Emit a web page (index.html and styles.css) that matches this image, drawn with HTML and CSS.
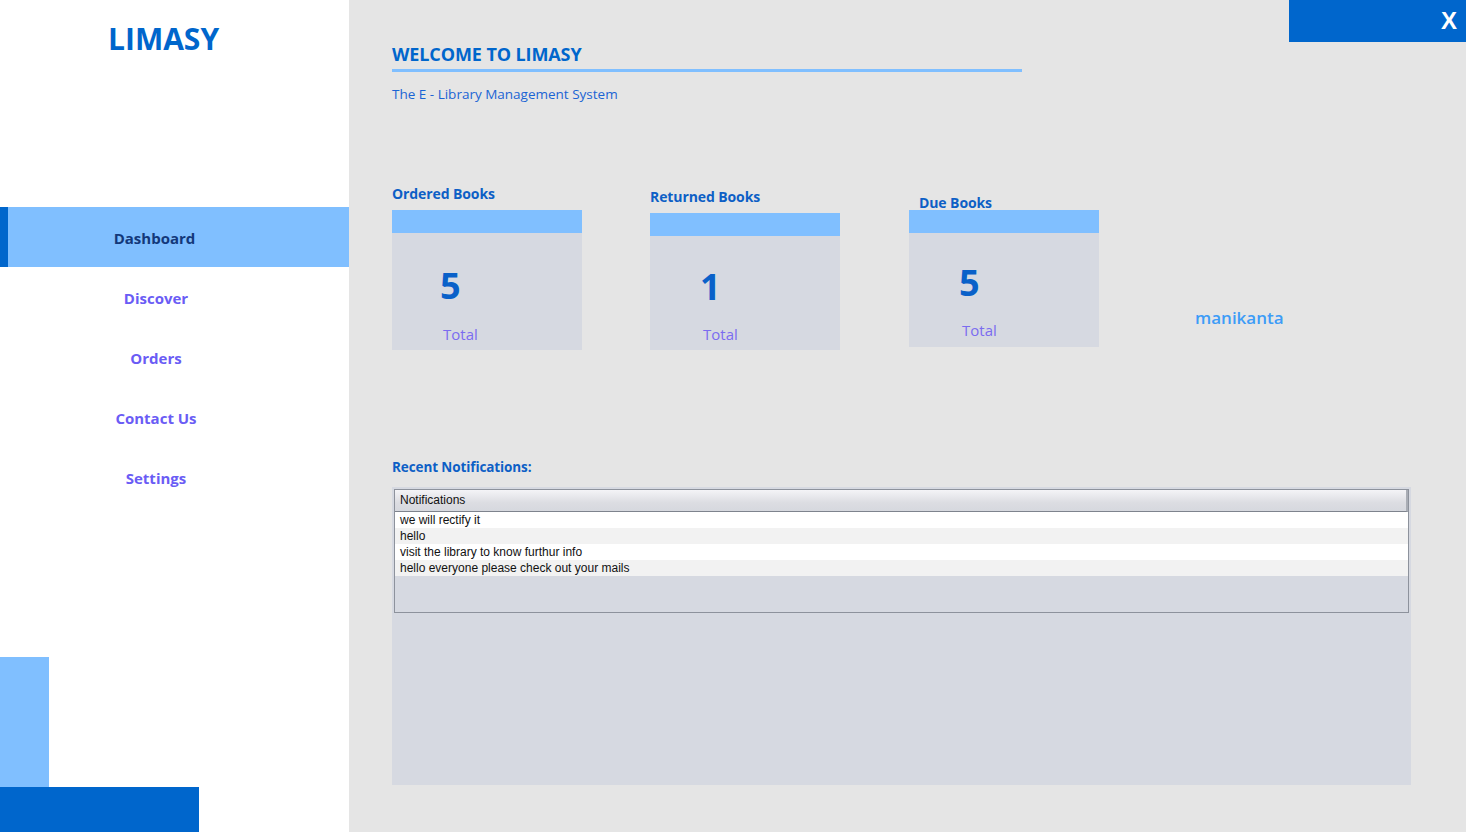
FILE: index.html
```html
<!DOCTYPE html>
<html>
<head>
<meta charset="utf-8">
<title>LIMASY</title>
<link rel="stylesheet" href="styles.css">
</head>
<body>
<div class="app">
  <aside class="sidebar">
    <div class="logo">LIMASY</div>
    <nav class="nav">
      <div class="nav-item active">Dashboard</div>
      <div class="nav-item">Discover</div>
      <div class="nav-item">Orders</div>
      <div class="nav-item">Contact Us</div>
      <div class="nav-item">Settings</div>
    </nav>
    <div class="deco">
      <div class="deco-light"></div>
      <div class="deco-dark"></div>
    </div>
  </aside>
  <main class="main">
    <div class="close">X</div>
    <div class="welcome">
      <h1 class="title">WELCOME TO LIMASY</h1>
      <p class="subtitle">The E - Library Management System</p>
    </div>
    <div class="stats">
      <div class="stat stat-ordered">
        <div class="stat-label">Ordered Books</div>
        <div class="card">
          <div class="card-bar"></div>
          <div class="card-body">
            <div class="num">5</div>
            <div class="total">Total</div>
          </div>
        </div>
      </div>
      <div class="stat stat-returned">
        <div class="stat-label">Returned Books</div>
        <div class="card card-short">
          <div class="card-bar"></div>
          <div class="card-body">
            <div class="num">1</div>
            <div class="total">Total</div>
          </div>
        </div>
      </div>
      <div class="stat stat-due">
        <div class="stat-label">Due Books</div>
        <div class="card card-short">
          <div class="card-bar"></div>
          <div class="card-body">
            <div class="num">5</div>
            <div class="total">Total</div>
          </div>
        </div>
      </div>
      <div class="user">manikanta</div>
    </div>
    <div class="notif">
      <div class="notif-label">Recent Notifications:</div>
      <div class="notif-panel">
        <div class="table">
          <div class="thead">Notifications</div>
          <div class="row">we will rectify it</div>
          <div class="row alt">hello</div>
          <div class="row">visit the library to know furthur info</div>
          <div class="row alt">hello everyone please check out your mails</div>
          <div class="table-empty"></div>
        </div>
      </div>
    </div>
  </main>
</div>
</body>
</html>
```

FILE: styles.css
```css
* { box-sizing: border-box; }
html, body { margin: 0; padding: 0; }
body {
  width: 1466px;
  height: 832px;
  overflow: hidden;
  font-family: "Open Sans", "Noto Sans", sans-serif;
}
.app {
  display: flex;
  height: 832px;
}
.sidebar {
  width: 349px;
  flex: none;
  background: #ffffff;
  display: flex;
  flex-direction: column;
}
.logo {
  color: #0066cc;
  font-weight: 700;
  font-size: 30px;
  line-height: 36px;
  padding: 21px 0 0 108px;
  height: 207px;
  letter-spacing: 0;
}
.nav {
  display: flex;
  flex-direction: column;
}
.nav-item {
  height: 60px;
  display: flex;
  align-items: center;
  justify-content: center;
  font-weight: 700;
  font-size: 15px;
  color: #6a5cf5;
  padding-right: 37px;
  padding-top: 2px;
}
.nav-item.active {
  background: #80bfff;
  color: #13387a;
  border-left: 8px solid #0066cc;
  padding-right: 48px;
}
.deco {
  margin-top: auto;
  display: flex;
  flex-direction: column;
}
.deco-light {
  width: 49px;
  height: 130px;
  background: #80bfff;
}
.deco-dark {
  width: 199px;
  height: 45px;
  background: #0066cc;
}
.main {
  flex: 1;
  background: #e5e5e5;
  position: relative;
  padding: 39px 0 0 43px;
}
.close {
  position: absolute;
  top: 0;
  right: 0;
  width: 177px;
  height: 42px;
  background: #0066cc;
  color: #ffffff;
  font-family: "Liberation Sans", Arial, sans-serif;
  font-weight: 700;
  font-size: 24px;
  line-height: 42px;
  text-align: right;
  padding-right: 9px;
}
.welcome {
  width: 630px;
}
.title {
  margin: 0;
  font-size: 18px;
  font-weight: 700;
  color: #0066cc;
  line-height: 30px;
  border-bottom: 3px solid #80bfff;
  letter-spacing: -0.1px;
}
.subtitle {
  margin: 13px 0 0 0;
  font-size: 13.5px;
  line-height: 18px;
  color: #1a64d4;
}
.stats {
  display: flex;
  align-items: flex-start;
  margin-top: 82px;
}
.stat {
  width: 190px;
  display: flex;
  flex-direction: column;
}
.stat-label {
  font-size: 14px;
  font-weight: 700;
  color: #0d5fc6;
  line-height: 18px;
  height: 25px;
  letter-spacing: -0.1px;
}
.stat-returned { margin-left: 68px; padding-top: 3px; }
.stat-due { margin-left: 69px; }
.stat-due .stat-label {
  padding-left: 10px;
  padding-top: 11px;
  line-height: 14px;
}
.card {
  background: #d6d9e1;
  height: 140px;
}
.card.card-short { height: 137px; }
.card-bar {
  height: 23px;
  background: #80bfff;
}
.card-body {
  padding: 33px 0 0 48px;
  display: flex;
  flex-direction: column;
}
.stat-returned .card-body,
.stat-due .card-body { padding-left: 50px; }
.num {
  font-size: 36px;
  font-weight: 700;
  color: #0a61c9;
  line-height: 40px;
  height: 58px;
}
.stat-returned .card-body { padding-top: 31px; }
.stat-returned .num { height: 57px; }
.stat-due .card-body { padding-top: 30px; }
.stat-due .num { height: 57px; }
.total {
  font-size: 15px;
  color: #7b6cf0;
  line-height: 20px;
  padding-left: 3px;
}
.user {
  margin-left: 96px;
  margin-top: 121px;
  font-size: 17px;
  font-weight: 600;
  color: #3d9cf7;
  line-height: 24px;
}
.notif {
  margin-top: 108px;
  width: 1019px;
}
.notif-label {
  font-size: 13.5px;
  font-weight: 700;
  color: #0d5fc6;
  line-height: 18px;
  height: 29px;
  letter-spacing: -0.1px;
}
.notif-panel {
  background: #d6d9e1;
  height: 298px;
  padding: 2px;
}
.table {
  border: 1px solid #8d929c;
  height: 124px;
  display: flex;
  flex-direction: column;
  font-family: "Liberation Sans", Arial, sans-serif;
  font-size: 12px;
  color: #111111;
}
.thead {
  height: 22px;
  line-height: 21px;
  padding-left: 5px;
  background: linear-gradient(#f4f4f7, #dcdde2 60%, #d6d8de);
  border-bottom: 1px solid #7e838d;
  border-right: 2px solid #a9adb5;
}
.row {
  height: 16px;
  line-height: 16px;
  padding-left: 5px;
  background: #ffffff;
}
.row.alt { background: #f2f2f2; }
.table-empty {
  flex: 1;
  background: #d6d9e1;
}
```
